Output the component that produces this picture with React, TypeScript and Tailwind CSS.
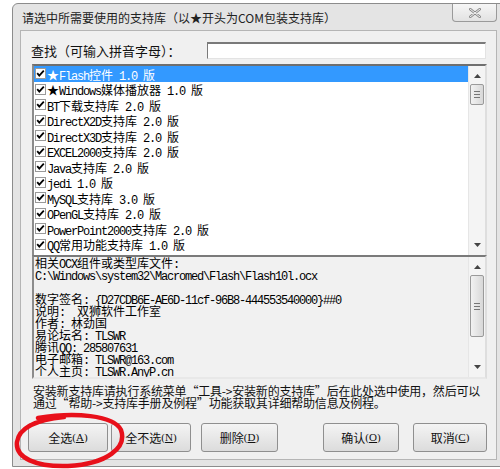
import React from "react";

const cjk = "font-['Noto_Sans_CJK_SC',sans-serif] text-[12px]";
const mono = "font-['Liberation_Mono','Noto_Sans_CJK_SC',monospace] text-[12px] tracking-[-1.2px]";

// SimSun-like: latin runs narrow mono, CJK runs full width
function Mixed({ text }: { text: string }) {
  const parts = text.match(/[\u0000-\u00ff]+|[^\u0000-\u00ff]+/g) || [];
  return (
    <>
      {parts.map((p, i) => (
        <span key={i} className={p.charCodeAt(0) < 256 ? mono : cjk}>
          {p}
        </span>
      ))}
    </>
  );
}

const libs = [
  "★Flash控件 1.0 版",
  "★Windows媒体播放器 1.0 版",
  "BT下载支持库 2.0 版",
  "DirectX2D支持库 2.0 版",
  "DirectX3D支持库 2.0 版",
  "EXCEL2000支持库 2.0 版",
  "Java支持库 2.0 版",
  "jedi 1.0 版",
  "MySQL支持库 3.0 版",
  "OPenGL支持库 2.0 版",
  "PowerPoint2000支持库 2.0 版",
  "QQ常用功能支持库 1.0 版",
];

const info = [
  "相关OCX组件或类型库文件:",
  "C:\\Windows\\system32\\Macromed\\Flash\\Flash10l.ocx",
  " ",
  "数字签名: {D27CDB6E-AE6D-11cf-96B8-444553540000}##0",
  "说明:  双狮软件工作室",
  "作者: 林劲国",
  "易论坛名: TLSWR",
  "腾讯QQ: 285807631",
  "电子邮箱: TLSWR@163.com",
  "个人主页: TLSWR.AnyP.cn",
];

function Check() {
  return (
    <svg width="11" height="11" viewBox="0 0 11 11" className="shrink-0">
      <rect x="0.5" y="0.5" width="10" height="10" fill="#fff" stroke="#9a9a9a" />
      <path d="M2.2 5.2 L4.3 7.6 L8.8 2.6" fill="none" stroke="#000" strokeWidth="1.8" />
    </svg>
  );
}

function ScrollBar({ thumbTop, thumbH }: { thumbTop: number; thumbH: number }) {
  return (
    <div className="relative w-[17px] h-full shrink-0 bg-[#f4f4f4] border-l border-[#e6e6e6]">
      <svg width="7" height="4" className="absolute left-[5px] top-[8px]">
        <path d="M0 4 L3.5 0 L7 4 Z" fill="#444" />
      </svg>
      <div
        className="absolute left-[1px] w-[14px] rounded-[2px] border border-[#9a9a9a] bg-gradient-to-r from-[#f2f2f2] to-[#d8d8d8] flex flex-col items-center justify-center gap-[2px]"
        style={{ top: thumbTop, height: thumbH }}
      >
        <div className="w-[6px] h-px bg-[#777]" />
        <div className="w-[6px] h-px bg-[#777]" />
        <div className="w-[6px] h-px bg-[#777]" />
      </div>
      <svg width="7" height="4" className="absolute left-[5px] bottom-[8px]">
        <path d="M0 0 L3.5 4 L7 0 Z" fill="#444" />
      </svg>
    </div>
  );
}

function Btn({ label, k, w }: { label: string; k: string; w: string }) {
  return (
    <button
      className={`${w} h-[29px] rounded-[3px] border border-[#8f8f8f] bg-gradient-to-b from-[#f4f4f4] to-[#dcdcdc] text-[#111] flex items-center justify-center ${cjk}`}
    >
      {label}
      <span className="font-['Liberation_Serif',serif] text-[11px]">
        (<u>{k}</u>)
      </span>
    </button>
  );
}

export default function App() {
  return (
    <div className="relative w-[500px] h-[469px] overflow-hidden bg-white pl-[12px] pt-[3px] font-['Noto_Sans_CJK_SC',sans-serif] text-[#1a1a1a]">
      <div className="w-[494px] h-[464px] rounded-tl-[6px] border border-[#8c8c8c] bg-[#e4e4e4] flex flex-col">
        {/* title bar */}
        <div className="h-[26px] flex items-start justify-between">
          <div className="pl-[9px] pt-[5px] text-[12px] text-[#222]">
            请选中所需要使用的支持库（以★开头为COM包装支持库）
          </div>
          <div className="mr-[8px] w-[45px] h-[18px] rounded-b-[4px] border border-t-0 border-[#9a9a9a] bg-gradient-to-b from-[#f6f6f6] to-[#e2e2e2] flex items-center justify-center">
            <svg width="12" height="10" viewBox="0 0 12 10">
              <path d="M1 1 L11 9 M11 1 L1 9" stroke="#8a8a8a" strokeWidth="2.6" strokeLinecap="round" />
              <path d="M1 1 L11 9 M11 1 L1 9" stroke="#f2f2f2" strokeWidth="1" strokeLinecap="round" />
            </svg>
          </div>
        </div>

        {/* client area */}
        <div className="ml-[7px] mr-[8px] h-[430px] border border-[#b5b5b5] bg-[#f0f0f0] flex flex-col">
          <div className="h-[28px] flex items-end pl-[10px] pr-[10px]">
            <span className="w-[176px] text-[13px] leading-[17px] text-[#111]">查找（可输入拼音字母）：</span>
            <div className="flex-1 h-[17px] bg-white border border-t-2 border-[#7a7a7a] border-r-[#e3e3e3] border-b-[#e3e3e3]" />
          </div>

          {/* list */}
          <div className="ml-[11px] mr-[9px] mt-[5px] h-[191px] flex border-2 border-t-[#6f6f6f] border-l-[#8c8c8c] border-r-[#dedede] border-b-0 bg-white">
            <div className="flex-1 overflow-hidden">
              {libs.map((t, i) => (
                <div
                  key={t}
                  className={`h-[15.5px] flex items-center gap-[1px] pl-[1px] whitespace-pre leading-none ${
                    i === 0 ? "bg-[#3399ff] text-white" : "text-black"
                  }`}
                >
                  <Check />
                  <span>
                    <Mixed text={t} />
                  </span>
                </div>
              ))}
            </div>
            <ScrollBar thumbTop={18} thumbH={21} />
          </div>

          {/* info */}
          <div className="ml-[11px] mr-[9px] h-[124px] flex border-2 border-t-[#7a7a7a] border-l-[#8c8c8c] border-r-[#dedede] border-b-[#e8e8e8] bg-[#f1f1f1]">
            <div className="flex-1 overflow-hidden pl-[1px]">
              <div className="-mt-[2px]">
                {info.map((t, i) => (
                  <div key={i} className="h-[12px] leading-[12px] whitespace-pre text-black">
                    <Mixed text={t} />
                  </div>
                ))}
              </div>
            </div>
            <ScrollBar thumbTop={18} thumbH={62} />
          </div>

          {/* hint */}
          <div className="pl-[12px] pt-[6px] text-[12px] leading-[11.5px] text-[#111] tracking-[-0.2px]">
            <div>安装新支持库请执行系统菜单“工具-&gt;安装新的支持库”后在此处选中使用，然后可以</div>
            <div>通过“帮助-&gt;支持库手册及例程”功能获取其详细帮助信息及例程。</div>
          </div>

          {/* buttons */}
          <div className="flex items-center pl-[7px] pt-[15px]">
            <Btn label="全选" k="A" w="w-[80px]" />
            <div className="w-[3px]" />
            <Btn label="全不选" k="N" w="w-[80px]" />
            <div className="w-[10px]" />
            <Btn label="删除" k="D" w="w-[77px]" />
            <div className="w-[45px]" />
            <Btn label="确认" k="O" w="w-[76px]" />
            <div className="w-[14px]" />
            <Btn label="取消" k="C" w="w-[74px]" />
          </div>
        </div>
      </div>

      {/* red marker circle */}
      <svg className="absolute left-0 top-0 pointer-events-none" width="500" height="469">
        <path
          d="M38 418 C74 412 114 415 121 430 C127 447 108 464 68 466 C36 467 15 458 17 442 C19 428 34 420 64 417"
          fill="none"
          stroke="#e8101a"
          strokeWidth="4.5"
          strokeLinecap="round"
        />
      </svg>
    </div>
  );
}
